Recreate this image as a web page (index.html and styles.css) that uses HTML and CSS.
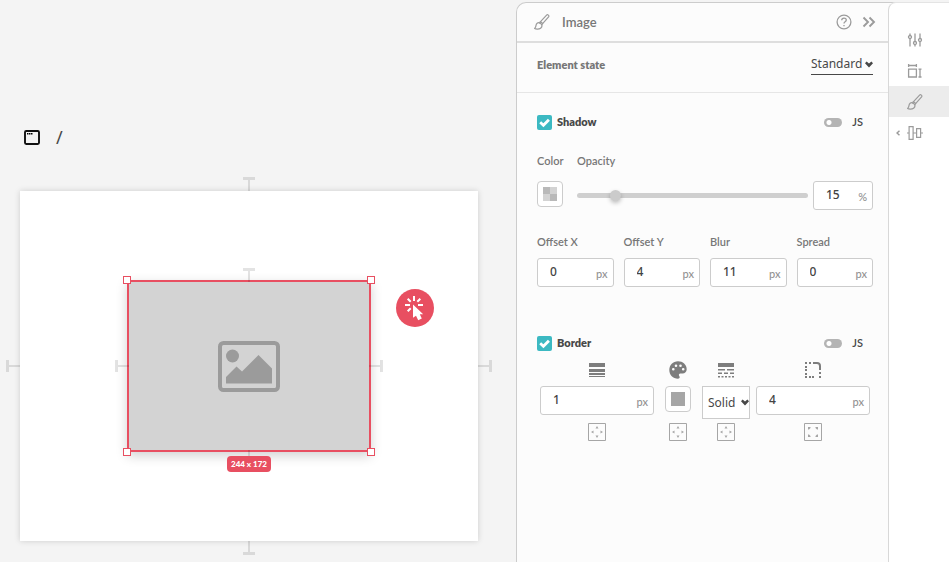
FILE: index.html
```html
<!DOCTYPE html>
<html lang="en">
<head>
<meta charset="utf-8">
<title>Image style editor</title>
<link rel="stylesheet" href="styles.css">
</head>
<body>
<svg class="defs" aria-hidden="true">
  <symbol id="brush" viewBox="0 0 16 16"><g fill="none" stroke="currentColor" stroke-width="1.2" stroke-linejoin="round" stroke-linecap="round"><path d="M6.3 7.8 12.6 1.1c1-1 3 .4 2 1.8L8.6 9.7"/><path d="M6.3 7.8c.9.2 2 1.1 2.3 1.9M6.3 7.8l-.8 1M8.6 9.7l-.8 1"/><path d="M5.3 8.8c-1.700-.4-3 .7-3.200 2.300-.2 1.500-.6 2.500-1.500 3.500 1.200.7 4.300.9 6-.4 1.300-1 1.600-2.300 1.100-3.500-.5-1-1.400-1.700-2.400-1.900z"/></g></symbol>
  <symbol id="tie" viewBox="0 0 12 14"><path d="M0 0h12v3H7v11H5V3H0z" fill="currentColor"/></symbol>
  <symbol id="caret" viewBox="0 0 8 7"><path d="M0 2.200 1.600.6 4 2.400 6.400.6 8 2.200 4 6.600z" fill="currentColor"/></symbol>
  <symbol id="sides" viewBox="0 0 18 18"><path d="M.5.5h17v17H.5z" fill="none" stroke="currentColor"/><path d="M9 3l1.500 2.500h-3zM9 15l1.500-2.500h-3zM3 9l2.500-1.500v3zM15 9l-2.500-1.500v3z" fill="currentColor"/></symbol>
  <symbol id="corners" viewBox="0 0 18 18"><path d="M.5.5h17v17H.5z" fill="none" stroke="currentColor"/><path d="M4 4h2.500v1L5 6.500H4zM14 4h-2.500v1L13 6.500h1zM4 14h2.500v-1L5 11.500H4zM14 14h-2.500v-1l1.500-1.500h1z" fill="currentColor"/></symbol>
</svg>
<div class="app">
  <main class="canvas">
    <nav class="crumbs">
      <a href="#" aria-label="Page"><svg class="page-icon" viewBox="0 0 16 15"><rect x="1" y="1" width="14" height="13" rx="1.200" fill="none" stroke="#111" stroke-width="1.900"/><path d="M3 3h1.500v1.500H3zM5 3h1.500v1.500H5zM7 3h1.500v1.500H7z"/></svg></a>
      <span>/</span>
    </nav>
    <div class="artboard">
      <svg class="tie top"><use href="#tie"/></svg>
      <svg class="tie right"><use href="#tie"/></svg>
      <svg class="tie bottom"><use href="#tie"/></svg>
      <svg class="tie left"><use href="#tie"/></svg>
      <div class="element">
        <svg class="tie top"><use href="#tie"/></svg>
        <svg class="tie right"><use href="#tie"/></svg>
        <svg class="tie bottom"><use href="#tie"/></svg>
        <svg class="tie left"><use href="#tie"/></svg>
        <svg class="picture" viewBox="0 0 62 51"><rect x="2" y="2" width="58" height="47" rx="3.500" fill="none" stroke="#9b9b9b" stroke-width="4"/><circle cx="14.500" cy="15" r="6.500" fill="#9b9b9b"/><path d="M8 42.500V36l10.500-10.500 5.500 5L40.500 14 54 27.500v15z" fill="#9b9b9b"/></svg>
        <i class="grip nw"></i><i class="grip ne"></i><i class="grip sw"></i><i class="grip se"></i>
        <span class="size">244 x 172</span>
      </div>
      <button class="action" aria-label="Add interaction"><svg viewBox="0 0 38 38"><path d="M18 7v5M9 16h5M22 16h5M11.700 9.700l3 3M24.300 9.700l-3 3M11.700 22.300l3-3" stroke="#fff" stroke-width="2" fill="none"/><path d="M17 15.500v13.300l3-2 2.200 4.400 3.600-1.700-2-4.300h3.400z" fill="#fff"/></svg></button>
    </div>
  </main>

  <section class="panel">
    <header class="panel-head">
      <svg class="i16"><use href="#brush"/></svg>
      <h1>Image</h1>
      <button aria-label="Help"><svg class="i16" viewBox="0 0 16 16" fill="none" stroke="currentColor" stroke-width="1.300"><circle cx="8" cy="8" r="6.900"/><path d="M5.700 6.300c0-3 4.600-2.900 4.600-.2 0 1.700-2.300 1.700-2.300 3.400M8 10.900v1.400"/></svg></button>
      <button aria-label="Collapse panel"><svg class="i14" viewBox="0 0 14 14" fill="none" stroke="currentColor" stroke-width="1.900"><path d="M1.500 2.500 6 7l-4.500 4.500M7.500 2.500 12 7l-4.500 4.500"/></svg></button>
    </header>

    <div class="state">
      <label for="state">Element state</label>
      <div class="pick line"><select id="state"><option>Standard</option></select><svg><use href="#caret"/></svg></div>
    </div>

    <fieldset class="group">
      <div class="group-head">
        <label class="check"><span class="box"><input type="checkbox" checked><svg viewBox="0 0 15 15"><path d="M3.200 7.300 6.400 10.300 11.900 4.700" fill="none" stroke="#fff" stroke-width="2.800"/></svg></span>Shadow</label>
        <label class="js"><input type="checkbox" class="toggle">JS</label>
      </div>
      <div class="tint">
        <label for="shadow-color">Color</label>
        <label for="opacity">Opacity</label>
        <button class="swatch" id="shadow-color" aria-label="Shadow color"><svg viewBox="0 0 14 14"><path fill="#d3d3d3" d="M0 0h14v14H0z"/><path fill="#b9b9b9" d="M0 0h7v7H0zM7 7h7v7H7z"/></svg></button>
        <input class="range" type="range" id="opacity" min="0" max="100" value="15">
        <label class="field"><input type="text" value="15" aria-label="Opacity percent"><span>%</span></label>
      </div>
      <div class="offsets">
        <div><label for="ox">Offset X</label><div class="field"><input type="text" id="ox" value="0"><span>px</span></div></div>
        <div><label for="oy">Offset Y</label><div class="field"><input type="text" id="oy" value="4"><span>px</span></div></div>
        <div><label for="blur">Blur</label><div class="field"><input type="text" id="blur" value="11"><span>px</span></div></div>
        <div><label for="spread">Spread</label><div class="field"><input type="text" id="spread" value="0"><span>px</span></div></div>
      </div>
    </fieldset>

    <fieldset class="group">
      <div class="group-head">
        <label class="check"><span class="box"><input type="checkbox" checked><svg viewBox="0 0 15 15"><path d="M3.200 7.300 6.400 10.300 11.900 4.700" fill="none" stroke="#fff" stroke-width="2.800"/></svg></span>Border</label>
        <label class="js"><input type="checkbox" class="toggle">JS</label>
      </div>
      <div class="edges">
        <svg class="kind" viewBox="0 0 18 18"><path d="M1 2h16v4H1zM1 8h16v3H1zM1 12h16v2H1zM1 15h16v1H1z"/></svg>
        <svg class="kind" viewBox="0 0 18 18"><path fill-rule="evenodd" d="M9 .3C4 .3.300 4.100.300 9S4 17.700 9 17.700c1 0 1.700-.7 1.700-1.600 0-.5-.3-.8-.5-1.100-.8-1.100-.1-2.400 1.200-2.400h2.200c2.300 0 4.100-1.800 4.100-4.300C17.700 3.700 13.800.3 9 .3zM4.300 9.600a1.300 1.300 0 1 1 0-2.600 1.300 1.300 0 0 1 0 2.600zM7 6a1.300 1.300 0 1 1 0-2.600A1.300 1.300 0 0 1 7 6zM11.500 6a1.300 1.300 0 1 1 0-2.600 1.300 1.300 0 0 1 0 2.600zM14.200 9.600a1.300 1.300 0 1 1 0-2.600 1.300 1.300 0 0 1 0 2.600z"/></svg>
        <svg class="kind" viewBox="0 0 18 18"><path d="M1 2h16v4H1zM1 8h7v1.500H1zM10 8h7v1.500h-7zM1 11.500h4V13H1zM7 11.500h4V13H7zM13 11.500h4V13h-4zM1 15h2v1.500H1zM4.500 15h2v1.500h-2zM8 15h2v1.500H8zM11.500 15h2v1.500h-2zM15 15h2v1.500h-2z"/></svg>
        <svg class="kind" viewBox="0 0 18 18"><path d="M9 2h4a3 3 0 0 1 3 3v4" fill="none" stroke="currentColor" stroke-width="2"/><path d="M1 1h2v2H1zM5 1h2v2H5zM1 5h2v2H1zM1 8h2v2H1zM1 12h2v2H1zM1 15h2v2H1zM5 15h2v2H5zM8 15h2v2H8zM15 11h2v2h-2zM15 15h2v2h-2z"/></svg>

        <label class="field"><input type="text" value="1" aria-label="Border width"><span>px</span></label>
        <button class="swatch" aria-label="Border color"><svg viewBox="0 0 14 14"><path fill="#a6a6a6" d="M0 0h14v14H0z"/></svg></button>
        <div class="pick boxed"><select aria-label="Border style"><option>Solid</option></select><svg><use href="#caret"/></svg></div>
        <label class="field"><input type="text" value="4" aria-label="Border radius"><span>px</span></label>

        <button class="split" aria-label="Width per side"><svg><use href="#sides"/></svg></button>
        <button class="split" aria-label="Color per side"><svg><use href="#sides"/></svg></button>
        <button class="split" aria-label="Style per side"><svg><use href="#sides"/></svg></button>
        <button class="split" aria-label="Radius per corner"><svg><use href="#corners"/></svg></button>
      </div>
    </fieldset>
  </section>

  <nav class="rail">
    <button aria-label="Settings"><svg class="i16" viewBox="0 0 16 16" fill="none" stroke="currentColor" stroke-width="1.300"><path d="M3 1.500v2M3 6.500v8M8 1.500v8M8 12.500v2M13 1.500v5M13 9.500v5"/><circle cx="3" cy="5" r="1.500"/><circle cx="8" cy="11" r="1.500"/><circle cx="13" cy="8" r="1.500"/></svg></button>
    <button aria-label="Dimensions"><svg class="i16" viewBox="0 0 16 16" fill="none" stroke="currentColor" stroke-width="1.300"><path d="M1.600 6.200h7.800v7.800H1.600zM1.600 2.500h7.800M1.600 1v3M9.400 1v3M11.500 6.200h3M11.500 14h3M13 6.200V14"/></svg></button>
    <button class="active" aria-label="Style"><svg class="i16"><use href="#brush"/></svg></button>
    <button aria-label="Alignment"><svg class="more" viewBox="0 0 4 6"><path d="M3.500.700 1 3l2.500 2.300" fill="none" stroke="currentColor" stroke-width="1.500"/></svg><svg class="i16" viewBox="0 0 16 16" fill="none" stroke="currentColor" stroke-width="1.200"><path d="M2.100 1.600h4v12.800h-4zM9.600 3.600h4v8.800h-4zM0 8h2M6 8h3.600M13.600 8H16"/></svg></button>
  </nav>
</div>
</body>
</html>
```
FILE: styles.css
```css
* { box-sizing: border-box; }

body {
  margin: 0;
  background: #f4f4f4;
  color: #484848;
  font-family: Lato, "Noto Sans", sans-serif;
  font-size: 11px;
  line-height: 16px;
}

button, input, select { font: inherit; color: inherit; }
button { border: 0; padding: 0; background: none; color: inherit; }
svg { display: block; flex: none; }
.defs { position: absolute; width: 0; height: 0; }
.i16 { width: 16px; height: 16px; }
.i14 { width: 14px; height: 14px; }

.app { display: flex; min-height: 100vh; }

/* Canvas */
.canvas { flex: 1; padding: 128px 38px 20px 20px; }
.crumbs {
  display: flex;
  align-items: center;
  gap: 16px;
  height: 18px;
  margin: 0 4px 45px;
  font: 18px/18px "Noto Sans", sans-serif;
}
.page-icon { width: 16px; height: 15px; }

.artboard {
  position: relative;
  display: flex;
  align-items: center;
  justify-content: center;
  height: 350px;
  background: #fff;
  box-shadow: 0 0 6px rgba(0, 0, 0, .16);
}
.element {
  position: relative;
  display: flex;
  align-items: center;
  justify-content: center;
  width: 244px;
  height: 172px;
  border: 2px solid #e84f61;
  background: #d3d3d3;
  box-shadow: 0 4px 11px rgba(0, 0, 0, .18);
}
.picture { width: 62px; height: 51px; }

.tie { position: absolute; width: 12px; height: 14px; color: rgba(0, 0, 0, .11); }
.tie.top { bottom: 100%; left: calc(50% - 6px); }
.tie.bottom { top: 100%; left: calc(50% - 6px); transform: rotate(180deg); }
.tie.left { right: calc(100% + 1px); top: calc(50% - 7px); transform: rotate(-90deg); }
.tie.right { left: calc(100% + 1px); top: calc(50% - 7px); transform: rotate(90deg); }

.grip { position: absolute; width: 8px; height: 8px; border: 1px solid #e84f61; background: #fff; }
.grip.nw, .grip.ne { top: -6px; }
.grip.sw, .grip.se { bottom: -6px; }
.grip.nw, .grip.sw { left: -6px; }
.grip.ne, .grip.se { right: -6px; }

.size {
  position: absolute;
  top: calc(100% + 6px);
  padding: 0 4px;
  border-radius: 4px;
  background: #e84f61;
  color: #fff;
  font-size: 8px;
  font-weight: 900;
  text-align: center;
  white-space: nowrap;
}
.action {
  position: absolute;
  top: 98px;
  right: 44px;
  width: 38px;
  height: 38px;
  border-radius: 50%;
  background: #e84f61;
}

/* Properties panel */
.panel {
  width: 380px;
  flex: none;
  margin: 2px -8px 0 0;
  padding-right: 8px;
  border: 1px solid #ccc;
  border-width: 1px 0 0 1px;
  border-radius: 10px 0 0 0;
  background: #fcfcfc;
}
.panel-head {
  display: flex;
  align-items: center;
  height: 40px;
  padding: 0 12px 1px 17px;
  border-bottom: 2px solid #dedede;
  color: #9b9b9b;
}
.panel-head h1 { flex: 1; margin: 0 0 0 12px; color: #777; font-size: 13px; font-weight: 600; }
.panel-head button + button { margin-left: 10px; }

.state {
  display: flex;
  align-items: center;
  justify-content: space-between;
  height: 50px;
  padding: 0 15px 6px 20px;
  border-bottom: 1px solid #e6e6e6;
  color: #777;
  font-weight: 800;
}
.pick { display: flex; align-items: center; position: relative; color: #484848; }
.pick select {
  width: 100%;
  border: 0;
  padding: 0 10px 0 0;
  appearance: none;
  background: none;
  font: 12px/20px "Noto Sans", sans-serif;
}
.pick svg { position: absolute; right: 0; width: 8px; height: 7px; pointer-events: none; }
.pick.line { border-bottom: 1px solid #484848; }

.group { margin: 0 15px 47px 20px; padding: 20px 0 0; border: 0; min-width: 0; }
.group + .group { padding: 0; }
.group-head { display: flex; justify-content: space-between; align-items: center; height: 18px; }
.check { display: flex; align-items: center; gap: 5px; font-weight: 800; }
.box { position: relative; width: 15px; height: 15px; }
.box input { display: block; width: 15px; height: 15px; margin: 0; appearance: none; border-radius: 2px; background: #fff; }
.box input:checked { background: #3cb9c2; }
.box svg { position: absolute; inset: 0; pointer-events: none; }
.js { display: flex; align-items: center; gap: 10px; padding-right: 10px; font-weight: 600; }
.toggle { width: 18px; height: 9px; margin: 0; appearance: none; border-radius: 5px; background: radial-gradient(circle at 5px 50%, #fff 2px, #b4b4b4 3px); }

.tint, .offsets { color: #777; font-weight: 600; }
.tint {
  display: grid;
  grid-template-columns: 35px 1fr 60px;
  column-gap: 5px;
  row-gap: 12px;
  margin-top: 22px;
}
.tint > label:nth-child(2) { grid-column: span 2; }
.swatch {
  display: flex;
  align-items: center;
  justify-content: center;
  width: 26px;
  height: 26px;
  border: 1px solid #ccc;
  border-radius: 4px;
  background: #fff;
}
.swatch svg { width: 14px; height: 14px; }
.range { width: 100%; height: 29px; margin: 0; appearance: none; background: none; }
.range::-webkit-slider-runnable-track { height: 5px; border-radius: 3px; background: #cfcfcf; }
.range::-webkit-slider-thumb {
  width: 11px;
  height: 11px;
  margin-top: -3px;
  appearance: none;
  border-radius: 50%;
  background: #cbcbcb;
  box-shadow: 0 2px 4px rgba(0, 0, 0, .25);
}

.field {
  display: flex;
  width: 100%;
  height: 29px;
  border: 1px solid #ccc;
  border-radius: 3px;
  background: #fff;
}
.field input {
  flex: 1;
  width: 0;
  min-width: 0;
  padding: 0 0 2px 12px;
  border: 0;
  outline: 0;
  background: none;
  color: #444;
  font-size: 12px;
  font-weight: 500;
  font-family: "Noto Sans", sans-serif;
}
.field span { padding: 7px 5px 0 0; color: #939393; font-weight: 500; }

.offsets { display: grid; grid-template-columns: repeat(4, 1fr); gap: 10px; margin-top: 24px; }
.offsets > div { display: grid; gap: 8px; }

.edges {
  display: grid;
  grid-template-columns: 1fr 36px 48px 1fr;
  grid-template-rows: 21px 33px 18px;
  gap: 4px 6px;
  justify-items: center;
  margin: 9px 3px 0;
}
.kind { width: 18px; height: 18px; fill: #7d7d7d; color: #7d7d7d; }
.split { color: #a6a6a6; }
.split, .split svg { width: 18px; height: 18px; }
.pick.boxed { width: 100%; height: 33px; border: 1px solid #ccc; background: #fff; }
.boxed select { padding-left: 5px; padding-right: 0; }

/* Icon rail */
.rail {
  position: relative;
  flex: none;
  width: 61px;
  margin-top: 2px;
  padding-top: 21px;
  border-left: 1px solid #d8d8d8;
  border-top: 1px solid #e4e4e4;
  border-radius: 8px 0 0 0;
  background: #fff;
  color: #9b9b9b;
}
.rail button { display: flex; align-items: center; width: 100%; height: 31px; padding-left: 18px; }
.rail .active { background: #ececec; }
.rail .more { width: 4px; height: 6px; margin: 0 7px 0 -11px; }
```
